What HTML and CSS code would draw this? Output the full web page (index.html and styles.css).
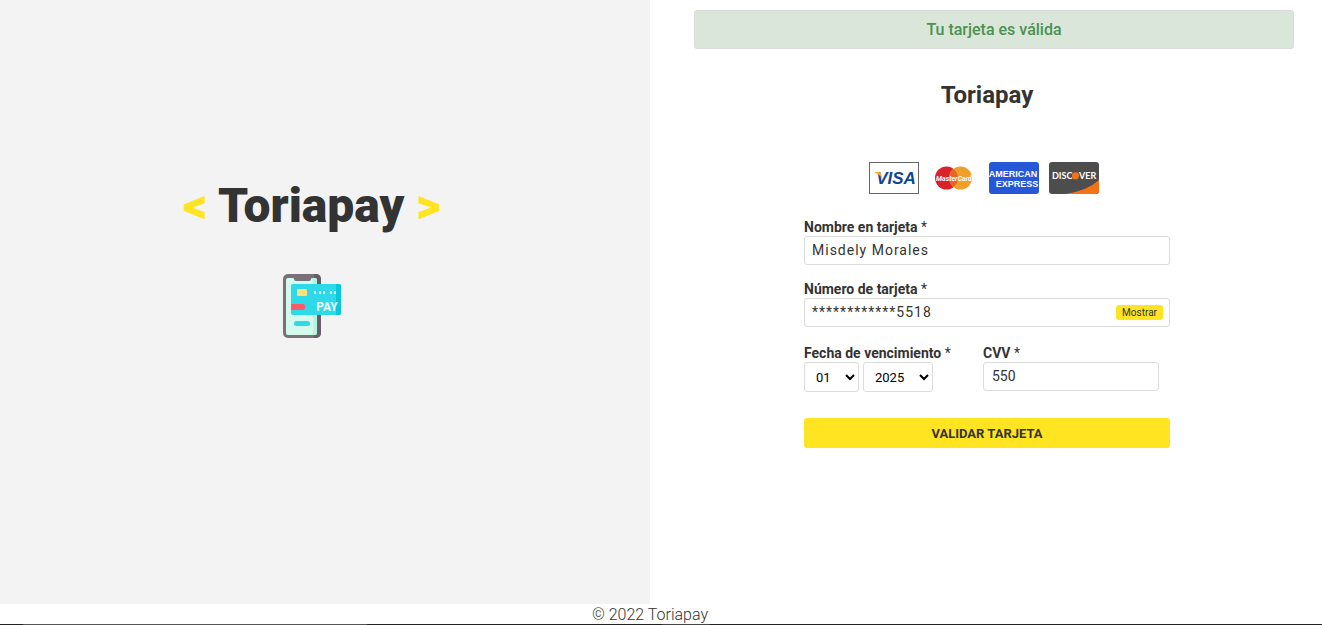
FILE: index.html
```html
<!DOCTYPE html>
<html lang="es">
<head>
<meta charset="utf-8">
<meta name="viewport" content="width=device-width, initial-scale=1">
<title>Toriapay</title>
<link rel="stylesheet" href="styles.css">
</head>
<body>
<div class="page">
  <main class="main">
    <section class="brand">
      <h1 class="brand-name"><span class="angle">&lt;</span> Toriapay <span class="angle">&gt;</span></h1>
      <svg class="brand-icon" viewBox="0 0 64 64" aria-hidden="true">
        <rect x="3" y="0" width="38" height="64" rx="5" fill="#7b7078"/>
        <path d="M34 0h2a5 5 0 0 1 5 5v54a5 5 0 0 1-5 5h-2z" fill="#685e68"/>
        <path d="M8 4h5q1 0 1 1 0 2 2 2h13q2 0 2-2 0-1 1-1h3q2 0 2 2v53q0 2-2 2H8q-2 0-2-2V6q0-2 2-2z" fill="#d5f9ed"/>
        <path d="M32 4h3q2 0 2 2v53q0 2-2 2h-4q2 0 2-3V8z" fill="#b5f2df"/>
        <rect x="11" y="10" width="50" height="31" rx="2" fill="#2ed9e9"/>
        <path d="M56 10h3q2 0 2 2v27q0 2-2 2h-3z" fill="#08c9dc"/>
        <rect x="17" y="15" width="10" height="7" rx="1" fill="#ffe277"/>
        <path d="M11 30h12a2 2 0 0 1 2 2v2a2 2 0 0 1-2 2H11z" fill="#ff5968"/>
        <rect x="14" y="47" width="16" height="5" rx="2.5" fill="#2ed9e9"/>
        <path d="M35 17v3M40 17v3M44 17v3M51 17v3M55 17v3" stroke="#e6ffff" stroke-width="1.8"/>
        <text x="47" y="37" class="pay-text">PAY</text>
      </svg>
    </section>

    <section class="checkout">
      <div class="alert" role="status">Tu tarjeta es válida</div>
      <div class="form-area">
      <form class="form">
        <h2 class="form-title">Toriapay</h2>
        <div class="cards">
          <svg class="card" viewBox="0 0 50 32" role="img" aria-label="Visa">
            <rect x=".5" y=".5" width="49" height="31" fill="#fff" stroke="#666"/>
            <text x="27" y="22" class="visa-text">VISA</text>
            <path d="M5 10h5q2 0 2 2l2 6q-2-5-9-8z" fill="#f7a823"/>
          </svg>
          <svg class="card" viewBox="0 0 50 32" role="img" aria-label="MasterCard">
            <circle cx="17.5" cy="16" r="11.5" fill="#d9222a"/>
            <circle cx="31.5" cy="16" r="11.5" fill="#f0a029"/>
            <path d="M24.5 6.9a11.5 11.5 0 0 1 0 18.2 11.5 11.5 0 0 1 0-18.2z" fill="#e5652a"/>
            <text x="25" y="19" class="master-text">MasterCard</text>
          </svg>
          <svg class="card" viewBox="0 0 50 32" role="img" aria-label="American Express">
            <rect width="50" height="32" rx="3" fill="#2557d6"/>
            <text x="24" y="15" class="amex-text">AMERICAN</text>
            <text x="28" y="25" class="amex-text">EXPRESS</text>
          </svg>
          <svg class="card" viewBox="0 0 50 32" role="img" aria-label="Discover">
            <rect width="50" height="32" rx="3" fill="#4d4d4d"/>
            <path d="M50 18v11q0 3-3 3H16q22-3 34-14z" fill="#f47216"/>
            <text x="3" y="17" class="discover-text">DISC</text>
            <circle cx="26.5" cy="13.8" r="3.6" fill="#f47216"/>
            <text x="30" y="17" class="discover-text">VER</text>
          </svg>
        </div>

        <div class="field">
          <label class="label" for="name">Nombre en tarjeta <span class="star">*</span></label>
          <input class="input spaced" id="name" type="text" value="Misdely Morales">
        </div>
        <div class="field">
          <label class="label" for="number">Número de tarjeta <span class="star">*</span></label>
          <div class="input-wrap">
            <input class="input spaced" id="number" type="text" value="************5518">
            <button class="show" type="button">Mostrar</button>
          </div>
        </div>
        <div class="row">
          <div class="expiry">
            <label class="label" for="month">Fecha de vencimiento <span class="star">*</span></label>
            <div class="selects">
              <select class="select month" id="month"><option>01</option></select>
              <select class="select year" aria-label="Año de vencimiento"><option>2025</option></select>
            </div>
          </div>
          <div class="cvv">
            <label class="label" for="cvv">CVV <span class="star">*</span></label>
            <input class="input" id="cvv" type="text" value="550">
          </div>
        </div>
        <button class="submit" type="submit">VALIDAR TARJETA</button>
      </form>
      </div>
    </section>
  </main>
  <footer class="footer">© 2022 Toriapay</footer>
  <div class="edge"></div>
</div>
</body>
</html>
```
FILE: styles.css
```css
* { box-sizing: border-box; }

body {
  margin: 0;
  background: #fff;
  color: #333;
  font-family: Roboto, sans-serif;
}

.page {
  min-height: 100vh;
  display: flex;
  flex-direction: column;
}

.main {
  flex: 1;
  display: grid;
  grid-template-columns: 650fr 672fr;
}

.brand {
  background: #f3f3f3;
  padding: 177px 26px 0 0;
  display: flex;
  flex-direction: column;
  align-items: center;
}

.brand-name {
  margin: 0 0 39px;
  font-size: 48px;
  line-height: 58px;
  font-weight: 900;
}

.angle { color: #ffe421; }

.brand-icon { width: 64px; height: 64px; }

.pay-text {
  font: 700 12px Roboto, sans-serif;
  fill: #e6ffff;
  text-anchor: middle;
}

.checkout { padding: 10px 28px 0 44px; }

.alert {
  padding: 8px;
  border: 1px solid #dcdcdc;
  border-radius: 3px;
  background: #dae6da;
  color: #4b9150;
  font-size: 16px;
  line-height: 21px;
  font-weight: 500;
  text-align: center;
}

.form-area { padding: 32px 14px 0 0; }

.form {
  width: 366px;
  max-width: 100%;
  margin: 0 auto;
}

.form-title {
  margin: 0 0 53px;
  font-size: 24px;
  line-height: 28px;
  font-weight: 700;
  text-align: center;
}

.cards {
  display: flex;
  justify-content: center;
  gap: 10px;
  margin-bottom: 24px;
  padding-right: 6px;
}

.card { width: 50px; height: 32px; }

.visa-text {
  font: italic 700 17px "Liberation Sans", sans-serif;
  fill: #0e4595;
  text-anchor: middle;
}

.master-text {
  font: italic 700 7px Roboto, sans-serif;
  fill: #fff;
  text-anchor: middle;
}

.amex-text {
  font: 700 9px "Liberation Sans", sans-serif;
  fill: #fff;
  text-anchor: middle;
}

.discover-text {
  font: 700 9px Lato, sans-serif;
  fill: #fff;
}

.field { margin-bottom: 15px; }

.label {
  display: block;
  font-size: 14px;
  line-height: 18px;
  font-weight: 700;
}

.star { font-weight: 400; }

.input {
  display: block;
  width: 100%;
  height: 29px;
  padding: 0 8px 2px;
  border: 1px solid #dcdcdc;
  border-radius: 3px;
  background: #fff;
  color: #333;
  font: 400 14px Roboto, sans-serif;
}

.spaced {
  padding-left: 7px;
  letter-spacing: 1px;
}

.input-wrap { position: relative; }

.show {
  position: absolute;
  top: 7px;
  right: 7px;
  height: 15px;
  padding: 0 6px;
  border: 0;
  border-radius: 3px;
  background: #ffe421;
  color: #333;
  font: 400 10px/15px Roboto, sans-serif;
}

.row {
  display: flex;
  justify-content: space-between;
  padding: 2px 11px 0 0;
  margin-bottom: 26px;
}

.cvv { width: 176px; }

.selects { display: flex; gap: 4px; }

.select {
  height: 30px;
  padding: 0 1px 0 7px;
  border: 1px solid #dcdcdc;
  border-radius: 3px;
  background: #fff;
  color: #000;
  font: 400 13px Roboto, sans-serif;
}

.month { width: 55px; }
.year { width: 70px; }

.submit {
  display: block;
  width: 100%;
  height: 30px;
  border: 0;
  border-radius: 3px;
  background: #ffe421;
  color: #333;
  font: 700 13px Roboto, sans-serif;
}

.footer {
  padding: 1px 22px 0 0;
  font-size: 16px;
  line-height: 19px;
  font-weight: 300;
  text-align: center;
}

.edge {
  height: 1px;
  background: linear-gradient(to right, #222 23px, #555 23px 367px, #222 367px 662px, #444 662px 710px, #222 710px);
}
```
